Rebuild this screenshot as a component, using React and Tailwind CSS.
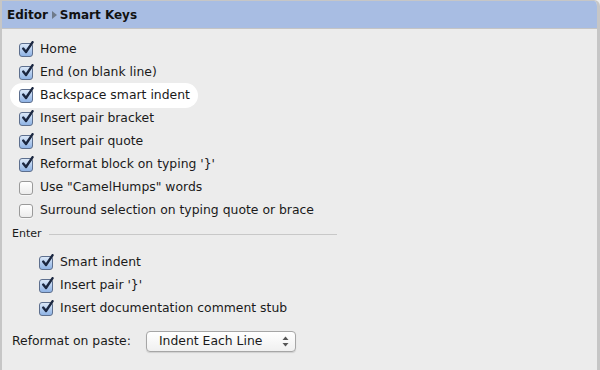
import React from 'react';

const FONT = { fontFamily: '"DejaVu Sans", "Lucida Grande", sans-serif' };

function Box({ checked }) {
  if (!checked) {
    return (
      <span className="inline-block w-[14px] h-[14px] rounded-[3px] border border-[#9a9a9a] bg-gradient-to-b from-white to-[#ececec] shadow-[0_1px_0_rgba(255,255,255,0.6)]" />
    );
  }
  return (
    <span className="relative inline-block w-[14px] h-[14px] rounded-[3px] border border-[#5d6f8e] bg-gradient-to-b from-[#dbe8f8] to-[#8eb2e4]">
      <svg className="absolute left-[1px] top-[-3px]" width="14" height="14" viewBox="0 0 14 14">
        <path d="M2.2 7.6 L5 11 L11.6 1.2" fill="none" stroke="#1b2740" strokeWidth="2.4" strokeLinecap="round" strokeLinejoin="round" />
      </svg>
    </span>
  );
}

function Row({ checked, label, highlight }) {
  return (
    <div
      className={
        'flex items-center gap-[7px] h-[23px] px-[9px] w-fit ' +
        (highlight ? 'bg-white rounded-full -my-[1px] h-[25px] pr-[8px]' : '')
      }
    >
      <Box checked={checked} />
      <span className="text-[12.4px] text-[#1a1a1a] leading-none">{label}</span>
    </div>
  );
}

export default function App() {
  const top = [
    ['Home', true],
    ['End (on blank line)', true],
    ['Backspace smart indent', true, true],
    ['Insert pair bracket', true],
    ['Insert pair quote', true],
    ["Reformat block on typing '}'", true],
    ['Use "CamelHumps" words', false],
    ['Surround selection on typing quote or brace', false],
  ];
  const enter = [
    ['Smart indent', true],
    ["Insert pair '}'", true],
    ['Insert documentation comment stub', true],
  ];

  return (
    <div style={FONT} className="w-[600px] h-[370px] bg-[#ececec] overflow-hidden">
      <div className="h-full flex flex-col border-l-2 border-r-[3px] border-t border-[#c6c6c6] rounded-tr-[6px] overflow-hidden">
        <div className="h-[28px] shrink-0 flex items-center px-[5px] bg-[#a8bde3] border-b border-[#c4c4c4] font-bold text-[12px] text-[#111]">
          <span>Editor</span>
          <svg className="mx-[2px]" width="8" height="10" viewBox="0 0 8 10">
            <path d="M2 1 L7 5 L2 9 Z" fill="#6f7a8a" />
          </svg>
          <span>Smart Keys</span>
        </div>

        <div className="flex flex-col pt-[9px] pl-[8px]">
          {top.map(([l, c, h]) => (
            <Row key={l} label={l} checked={c} highlight={h} />
          ))}
        </div>

        <div className="flex items-center h-[24px] pl-[10px] pr-[260px] gap-[7px]">
          <span className="text-[11px] text-[#1a1a1a]">Enter</span>
          <div className="flex-1 h-px bg-[#c8c8c8]" />
        </div>

        <div className="flex flex-col pt-[5px] pl-[28px]">
          {enter.map(([l, c]) => (
            <Row key={l} label={l} checked={c} />
          ))}
        </div>

        <div className="flex items-center gap-[15px] pl-[10px] mt-[11px]">
          <span className="text-[12.4px] text-[#1a1a1a]">Reformat on paste:</span>
          <div className="flex items-center justify-between w-[150px] h-[21px] rounded-[4px] border border-[#a6a6a6] bg-gradient-to-b from-white to-[#f0f0f0] pl-[12px] pr-[6px] shadow-[0_1px_1px_rgba(0,0,0,0.12)]">
            <span className="text-[12.4px] text-[#1a1a1a]">Indent Each Line</span>
            <svg width="7" height="11" viewBox="0 0 7 11">
              <path d="M3.5 0.5 L6.5 4 L0.5 4 Z" fill="#555" />
              <path d="M3.5 10.5 L6.5 7 L0.5 7 Z" fill="#555" />
            </svg>
          </div>
        </div>
      </div>
    </div>
  );
}
